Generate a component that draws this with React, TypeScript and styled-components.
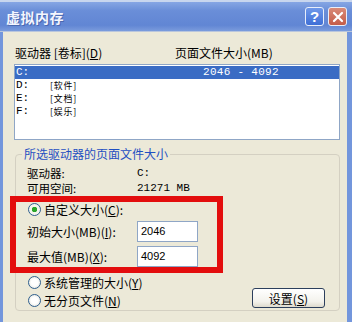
import React from "react";
import styled, { createGlobalStyle } from "styled-components";

const GlobalStyle = createGlobalStyle`
  html, body {
    margin: 0;
    padding: 0;
    background: #ece9d8;
  }
  body {
    font-family: "Noto Sans CJK SC", "Liberation Sans", sans-serif;
    font-size: 12px;
    color: #000;
  }
`;

const drives = [
  { letter: "C:", label: "", size: "2046 - 4092" },
  { letter: "D:", label: "[软件]", size: "" },
  { letter: "E:", label: "[文档]", size: "" },
  { letter: "F:", label: "[娱乐]", size: "" },
];

const App = () => {
  return (
    <>
      <GlobalStyle />
      <Window>
        <TitleBar>
          <Title>虚拟内存</Title>
          <TitleButtons>
            <HelpButton>?</HelpButton>
            <CloseButton>
              <svg width="12" height="12" viewBox="0 0 12 12">
                <path d="M2 2 L10 10 M10 2 L2 10" stroke="#fff" strokeWidth="2.2" strokeLinecap="round" />
              </svg>
            </CloseButton>
          </TitleButtons>
        </TitleBar>
        <Body>
          <ColumnHeader>
            <HeaderDrive>
              驱动器 [卷标](<u>D</u>)
            </HeaderDrive>
            <span>页面文件大小(MB)</span>
          </ColumnHeader>
          <ListBox>
            {drives.map((d, i) => (
              <DriveRow key={d.letter} $selected={i === 0}>
                <DriveLetter>{d.letter}</DriveLetter>
                <DriveLabel>{d.label}</DriveLabel>
                <DriveSize>{d.size}</DriveSize>
              </DriveRow>
            ))}
          </ListBox>
          <GroupBox>
            <Legend>所选驱动器的页面文件大小</Legend>
            <InfoGrid>
              <span>驱动器:</span>
              <InfoValue>C:</InfoValue>
              <span>可用空间:</span>
              <InfoValue>21271 MB</InfoValue>
            </InfoGrid>
            <Highlight>
              <RadioRow>
                <Radio $checked />
                <span>
                  自定义大小(<u>C</u>):
                </span>
              </RadioRow>
              <FieldRow>
                <FieldLabel>
                  初始大小(MB)(<u>I</u>):
                </FieldLabel>
                <TextBox>2046</TextBox>
              </FieldRow>
              <FieldRow>
                <FieldLabel>
                  最大值(MB)(<u>X</u>):
                </FieldLabel>
                <TextBox>4092</TextBox>
              </FieldRow>
            </Highlight>
            <BottomRow>
              <RadioColumn>
                <RadioRow>
                  <Radio />
                  <span>
                    系统管理的大小(<u>Y</u>)
                  </span>
                </RadioRow>
                <RadioRow>
                  <Radio />
                  <span>
                    无分页文件(<u>N</u>)
                  </span>
                </RadioRow>
              </RadioColumn>
              <SetButton>
                设置(<u>S</u>)
              </SetButton>
            </BottomRow>
          </GroupBox>
        </Body>
      </Window>
    </>
  );
};

export default App;

const Window = styled.div`
  width: 352px;
  height: 322px;
  display: flex;
  flex-direction: column;
  overflow: hidden;
`;

const TitleBar = styled.div`
  height: 32px;
  box-sizing: border-box;
  border-top: 2px solid #c8d6ee;
  border-bottom: 1px solid #b9c6dd;
  background: linear-gradient(#86a6e4, #6a8ed8 30%, #6186d4 80%, #7a9bdc);
  display: flex;
  align-items: center;
  justify-content: space-between;
  padding: 0 5px 0 6px;
`;

const Title = styled.div`
  color: #f4f6ff;
  font-weight: bold;
  font-size: 14px;
  letter-spacing: 0.5px;
  text-shadow: 1px 1px 0 #4a68b0;
`;

const TitleButtons = styled.div`
  display: flex;
  gap: 4px;
`;

const CaptionButton = styled.div`
  width: 19px;
  height: 19px;
  box-sizing: border-box;
  border: 1px solid #e8eefa;
  border-radius: 3px;
  display: flex;
  align-items: center;
  justify-content: center;
  color: #fff;
  font-weight: bold;
  font-family: "Liberation Sans", sans-serif;
  font-size: 15px;
`;

const HelpButton = styled(CaptionButton)`
  background: linear-gradient(#6e98ea, #3f6fd6);
`;

const CloseButton = styled(CaptionButton)`
  background: linear-gradient(#d98a78, #c45c48);
`;

const Body = styled.div`
  flex: 1;
  background: #ece9d8;
  border-left: 3px solid #7396dc;
  border-right: 5px solid #7396dc;
  padding: 13px 8px 0 11px;
  display: flex;
  flex-direction: column;
`;

const ColumnHeader = styled.div`
  display: flex;
  height: 15px;
  align-items: center;
  padding-left: 1px;
`;

const HeaderDrive = styled.span`
  width: 160px;
`;

const ListBox = styled.div`
  margin-top: 4px;
  height: 76px;
  width: 326px;
  box-sizing: border-box;
  border: 1px solid #8fa6c6;
  background: #fff;
  padding-top: 1px;
`;

const DriveRow = styled.div<{ $selected?: boolean }>`
  height: 13px;
  display: flex;
  align-items: center;
  line-height: 13px;
  background: ${(p) => (p.$selected ? "#3a6cc4" : "transparent")};
  color: ${(p) => (p.$selected ? "#fff" : "#000")};
  padding-left: 1px;
`;

const DriveLetter = styled.span`
  width: 34px;
  font-family: "Liberation Mono", monospace;
  font-size: 11px;
`;

const DriveLabel = styled.span`
  width: 153px;
  font-size: 8.9px;
  letter-spacing: 0.8px;
`;

const DriveSize = styled.span`
  font-family: "Liberation Mono", monospace;
  font-size: 11px;
  letter-spacing: 0.3px;
`;

const GroupBox = styled.fieldset`
  margin: 7px 0 0 1px;
  width: 325px;
  height: 164px;
  box-sizing: border-box;
  border: 1px solid #d4d0c2;
  border-radius: 4px;
  padding: 5px 10px 0 11px;
  display: flex;
  flex-direction: column;
`;

const Legend = styled.legend`
  color: #1f4fc2;
  padding: 0 2px;
  margin-left: -5px;
  line-height: 14px;
`;

const InfoGrid = styled.div`
  display: grid;
  grid-template-columns: 110px 1fr;
  grid-auto-rows: 15px;
  line-height: 15px;
  font-size: 11.5px;
`;

const InfoValue = styled.span`
  font-family: "Liberation Mono", monospace;
  font-size: 11px;
`;

const Highlight = styled.div`
  margin: 0 0 0 -17px;
  width: 213px;
  box-sizing: border-box;
  border: 6px solid #e30d0d;
  padding: 0 0 0 11px;
  display: flex;
  flex-direction: column;
  gap: 4px;
`;

const RadioRow = styled.div`
  display: flex;
  align-items: center;
  gap: 3px;
  height: 15px;
  padding-left: 1px;
`;

const Radio = styled.span<{ $checked?: boolean }>`
  width: 11px;
  height: 11px;
  border-radius: 50%;
  border: 1px solid #2f5f8e;
  background: ${(p) =>
    p.$checked
      ? "radial-gradient(circle, #2aa52a 0 2.5px, #f4f4ee 3px)"
      : "radial-gradient(circle, #ffffff 40%, #dcdcd2)"};
  flex-shrink: 0;
`;

const FieldRow = styled.div`
  display: flex;
  align-items: center;
`;

const FieldLabel = styled.span`
  width: 110px;
`;

const TextBox = styled.div`
  width: 61px;
  height: 21px;
  box-sizing: border-box;
  border: 1px solid #8fa6c6;
  background: #fff;
  padding: 1px 3px;
  font-family: "Liberation Sans", sans-serif;
  font-size: 11px;
  line-height: 17px;
`;

const BottomRow = styled.div`
  display: flex;
  justify-content: space-between;
  align-items: flex-end;
  margin-top: 2px;
`;

const RadioColumn = styled.div`
  display: flex;
  flex-direction: column;
  gap: 3px;
`;

const SetButton = styled.div`
  width: 73px;
  height: 20px;
  box-sizing: border-box;
  border: 1px solid #2c3f5c;
  border-radius: 3px;
  background: linear-gradient(#ffffff, #f3f2ec 70%, #dedbcd);
  display: flex;
  align-items: center;
  justify-content: center;
  margin-right: 4px;
  margin-bottom: 0;
`;
